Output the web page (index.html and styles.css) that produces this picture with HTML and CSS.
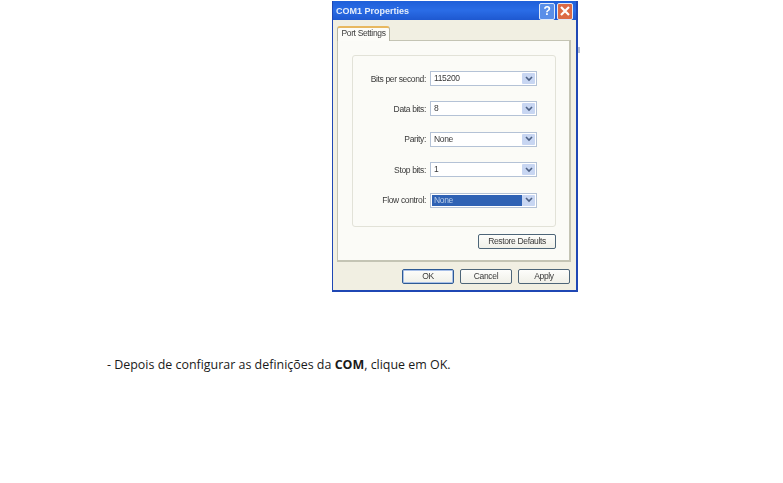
FILE: index.html
```html
<!DOCTYPE html>
<html lang="pt">
<head>
<meta charset="utf-8">
<title>COM1 Properties</title>
<link rel="stylesheet" href="styles.css">
</head>
<body>
<div class="dialog">
  <span class="edge"></span>
  <div class="titlebar">
    <span class="title">COM1 Properties</span>
    <span class="tb-btn help">?</span>
    <span class="tb-btn close">
      <svg viewBox="0 0 12 12" width="12" height="12"><path d="M2 2L10 10M10 2L2 10" stroke="#fff" stroke-width="2.2" fill="none"/></svg>
    </span>
  </div>
  <div class="client">
    <div class="tabs"><span class="tab">Port Settings</span></div>
    <div class="panel">
      <div class="group">
        <div class="row"><span class="label">Bits per second:</span><div class="combo"><span class="value">115200</span><span class="arrow"><svg viewBox="0 0 8 6" width="8" height="6"><path d="M1 1L4 4L7 1" stroke="#4d6185" stroke-width="1.6" fill="none"/></svg></span></div></div>
        <div class="row"><span class="label">Data bits:</span><div class="combo"><span class="value">8</span><span class="arrow"><svg viewBox="0 0 8 6" width="8" height="6"><path d="M1 1L4 4L7 1" stroke="#4d6185" stroke-width="1.6" fill="none"/></svg></span></div></div>
        <div class="row"><span class="label">Parity:</span><div class="combo"><span class="value">None</span><span class="arrow"><svg viewBox="0 0 8 6" width="8" height="6"><path d="M1 1L4 4L7 1" stroke="#4d6185" stroke-width="1.6" fill="none"/></svg></span></div></div>
        <div class="row"><span class="label">Stop bits:</span><div class="combo"><span class="value">1</span><span class="arrow"><svg viewBox="0 0 8 6" width="8" height="6"><path d="M1 1L4 4L7 1" stroke="#4d6185" stroke-width="1.6" fill="none"/></svg></span></div></div>
        <div class="row"><span class="label">Flow control:</span><div class="combo"><span class="value selected">None</span><span class="arrow"><svg viewBox="0 0 8 6" width="8" height="6"><path d="M1 1L4 4L7 1" stroke="#4d6185" stroke-width="1.6" fill="none"/></svg></span></div></div>
      </div>
      <div class="restore-row"><span class="btn restore">Restore Defaults</span></div>
    </div>
    <div class="actions">
      <span class="btn default">OK</span>
      <span class="btn">Cancel</span>
      <span class="btn">Apply</span>
    </div>
  </div>
</div>
<p class="note">- Depois de configurar as definições da <b>COM</b>, clique em OK.</p>
</body>
</html>
```
FILE: styles.css
```css
html, body { margin: 0; padding: 0; background: #fff; }
body { width: 783px; height: 483px; overflow: hidden; }
.dialog {
  position: relative;
  width: 246px; height: 291px; margin: 1px 0 0 332px;
  box-sizing: border-box; display: flex; flex-direction: column;
  background: #1f47b4; padding: 0 2px 2px 1px;
  font-family: "Liberation Sans", sans-serif; font-size: 8.5px; letter-spacing: -0.35px; color: #3a3a3a;
  filter: blur(0.5px);
}
.edge { position: absolute; right: -2px; top: 46px; width: 2px; height: 6px; background: #b8c0d0; }
.titlebar {
  height: 19px; flex: none; display: flex; align-items: center; gap: 2px;
  padding: 1px 3px 0 3px; box-sizing: border-box;
  background: linear-gradient(#1f5fd8, #2a6ce6 50%, #1e58d0);
}
.title { flex: 1; color: #e4ecfa; font-weight: bold; font-size: 9px; letter-spacing: 0; }
.tb-btn {
  width: 14px; height: 15px; border: 1px solid #dfe8f8; border-radius: 2px;
  display: flex; align-items: center; justify-content: center;
  color: #fff; font-weight: bold; font-size: 12px;
}
.help { background: #5a8ee8; }
.close { background: #dc6a45; }
.client {
  flex: 1; background: #f1efe2; padding: 4px 5px 0 4px;
  display: flex; flex-direction: column; box-sizing: border-box;
}
.tabs { height: 16px; flex: none; display: flex; align-items: flex-end; }
.tab {
  width: 53px; height: 15px; box-sizing: border-box; text-align: center; line-height: 11px;
  background: #fcfcf8; border: 1px solid #b5b5a5; border-bottom: 0;
  border-top: 2px solid #e8b860; border-radius: 3px 3px 0 0; margin-bottom: -1px; position: relative;
}
.panel {
  height: 222px; flex: none; box-sizing: border-box; padding: 14px 13px 0 14px;
  background: #fbfbf7; border: 1px solid #c4c4b4; border-width: 1px 2px 2px 1px;
}
.group {
  height: 172px; box-sizing: border-box; border: 1px solid #e2e2d8; border-radius: 3px;
  padding: 15px 18px 0 0; display: flex; flex-direction: column; gap: 15.4px;
}
.row { display: flex; align-items: center; gap: 4px; height: 15px; flex: none; }
.label { flex: 1; text-align: right; }
.combo {
  width: 107px; height: 15px; box-sizing: border-box; display: flex; background: #fff;
  border: 1px solid #b4c2d6; padding: 1px;
}
.value { flex: 1; padding-left: 2px; line-height: 11px; }
.value.selected { background: #2f62b4; color: #b8cbe8; }
.arrow {
  width: 13px; display: flex; align-items: center; justify-content: center;
  background: #c8d6f2; border-radius: 1px;
}
.restore-row { display: flex; justify-content: flex-end; margin-top: 7px; }
.btn {
  width: 52px; height: 15px; box-sizing: border-box; border: 1px solid #4d6578; border-radius: 2px;
  background: linear-gradient(#fdfdfb, #f0f0e8); text-align: center; line-height: 13px;
}
.restore { width: 78px; }
.default { border-color: #2e5a94; box-shadow: inset 0 0 0 1px #a8c0e8; }
.actions { display: flex; justify-content: flex-end; gap: 6px; margin-top: 7px; padding-right: 1px; }
.note {
  margin: 64px 0 0 107px; font-family: "Open Sans", sans-serif; font-size: 12.45px;
  line-height: 18px; color: #1a1a1a;
}
```
